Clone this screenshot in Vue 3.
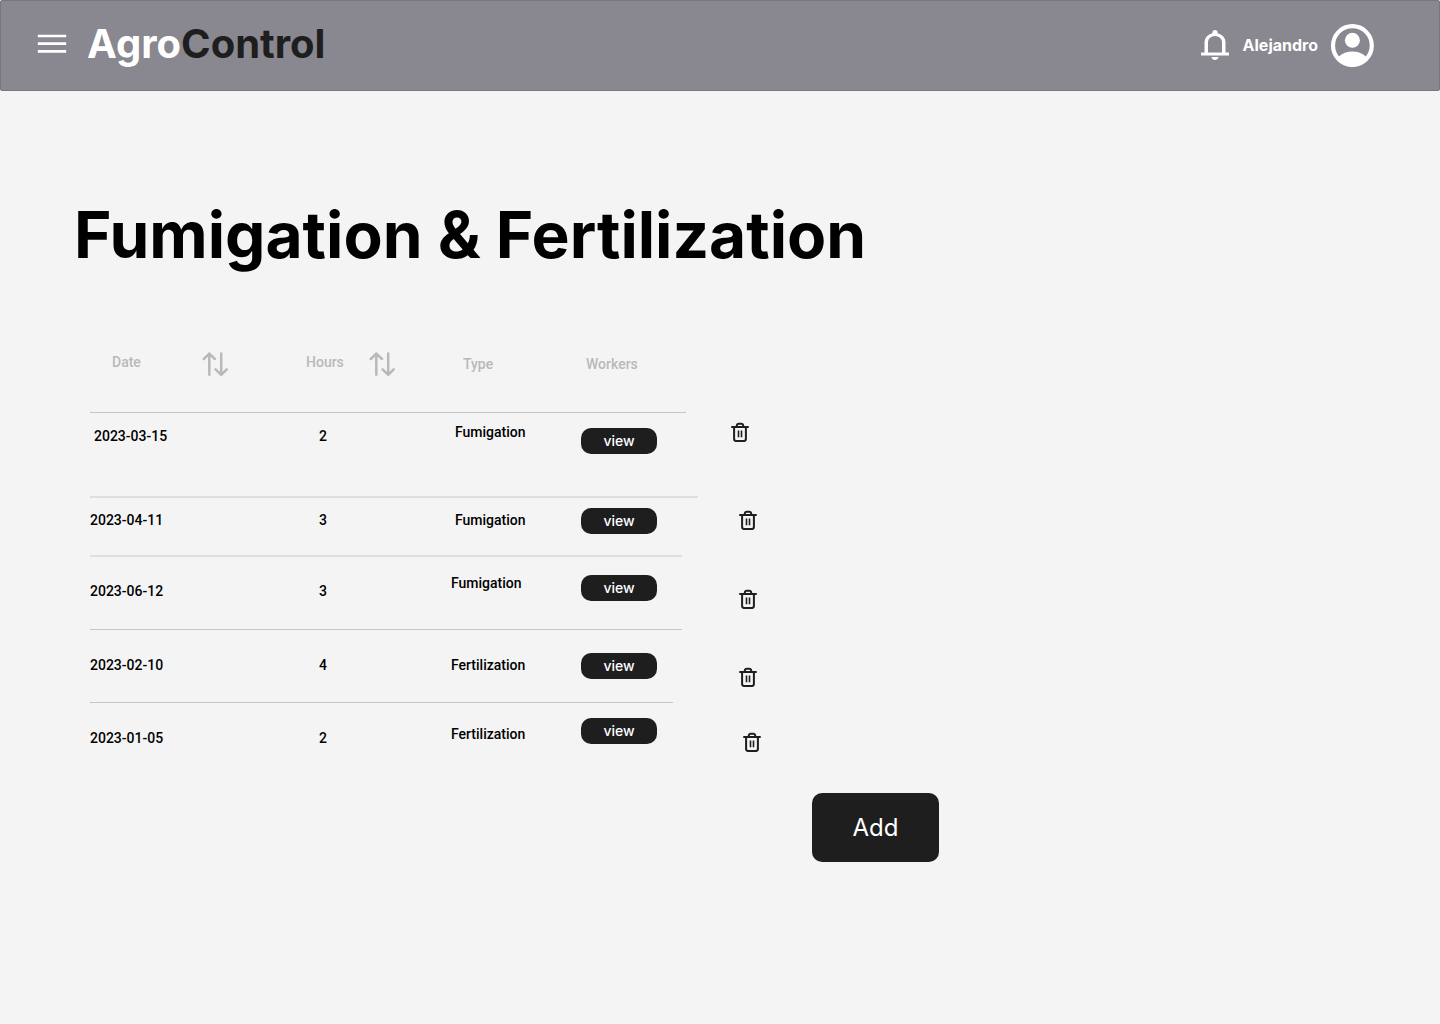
<script setup>
const rows = [
  { date: '2023-03-15', hours: 2, type: 'Fumigation', row: 'tall', cells: ['d16 in4', 'd16', 'd12 in4', 'd16', 'd8'] },
  { date: '2023-04-11', hours: 3, type: 'Fumigation', row: 'short', cells: ['d16', 'd16', 'd16 in4', 'd12', 'd12 in8'] },
  { date: '2023-06-12', hours: 3, type: 'Fumigation', row: 'medium soft', cells: ['d28', 'd28', 'd20', 'd20', 'd32 in8'] },
  { date: '2023-02-10', hours: 4, type: 'Fertilization', row: 'medium', cells: ['d28', 'd28', 'd28', 'd24', 'd36 in8'] },
  { date: '2023-01-05', hours: 2, type: 'Fertilization', row: 'medium narrow', cells: ['d28', 'd28', 'd24', 'd16', 'd28 in12'] },
]
</script>

<template>
  <div class="page">
    <header class="topbar">
      <button class="icon-btn" type="button" aria-label="Menu">
        <svg width="30" height="20" viewBox="0 0 30 20">
          <path d="M.8 2h28.4M.8 9.7h28.4M.8 17.4h28.4" stroke="#fff" stroke-width="2.7" />
        </svg>
      </button>
      <a class="brand" href="#">Agro<span>Control</span></a>
      <div class="account">
        <button class="icon-btn" type="button" aria-label="Notifications">
          <svg width="28" height="30" viewBox="4 2 16 20" preserveAspectRatio="none">
            <path
              fill="#fff"
              d="M4 19v-2h2v-7q0-2.075 1.25-3.687T10.5 4.2v-.7q0-.625.438-1.062T12 2t1.063.438T13.5 3.5v.7q2 .5 3.25 2.113T18 10v7h2v2zm8 3q-.825 0-1.412-.587T10 20h4q0 .825-.587 1.413T12 22m-4-5h8v-7q0-1.65-1.175-2.825T12 6T9.175 7.175T8 10z"
            />
          </svg>
        </button>
        <span class="user">Alejandro</span>
        <button class="icon-btn" type="button" aria-label="Profile">
          <svg width="44" height="44" viewBox="0 0 44 44">
            <circle cx="22.4" cy="22.6" r="19.4" fill="none" stroke="#fff" stroke-width="4.2" />
            <circle cx="22.4" cy="17.2" r="7.5" fill="#fff" />
            <path fill="#fff" d="M8.4 34Q14.4 28.6 22.4 28.6T36.4 34A18.5 18.5 0 0 1 8.4 34Z" />
          </svg>
        </button>
      </div>
    </header>

    <main>
      <h1>Fumigation &amp; Fertilization</h1>

      <table>
        <colgroup>
          <col class="c-date" />
          <col class="c-hours" />
          <col class="c-type" />
          <col class="c-workers" />
          <col class="c-delete" />
        </colgroup>
        <thead>
          <tr>
            <th scope="col">
              <div class="head head-date">
                <span>Date</span>
                <button class="icon-btn" type="button" aria-label="Sort by date">
                  <svg class="sort" width="26" height="26" viewBox="0 0 26 26">
                    <path d="M7.3 23.8V2.6M1.8 8l5.5-5.4L12.9 8M19.2 2.6v21.2M13.6 18.3l5.6 5.5 5.5-5.5" />
                  </svg>
                </button>
              </div>
            </th>
            <th scope="col">
              <div class="head head-hours">
                <span>Hours</span>
                <button class="icon-btn" type="button" aria-label="Sort by hours">
                  <svg class="sort" width="26" height="26" viewBox="0 0 26 26">
                    <path d="M7.3 23.8V2.6M1.8 8l5.5-5.4L12.9 8M19.2 2.6v21.2M13.6 18.3l5.6 5.5 5.5-5.5" />
                  </svg>
                </button>
              </div>
            </th>
            <th scope="col"><div class="head head-type">Type</div></th>
            <th scope="col"><div class="head head-workers">Workers</div></th>
            <td></td>
          </tr>
        </thead>
        <tbody>
          <tr v-for="r in rows" :key="r.date" :class="r.row">
            <td :class="r.cells[0]">{{ r.date }}</td>
            <td :class="r.cells[1]"><div class="hours">{{ r.hours }}</div></td>
            <td :class="r.cells[2]">{{ r.type }}</td>
            <td :class="r.cells[3]"><button class="view" type="button">view</button></td>
            <td :class="r.cells[4]">
              <button class="icon-btn" type="button" :aria-label="'Delete ' + r.date">
                <svg class="trash" width="24" height="24" viewBox="0 0 24 24">
                  <path d="M4 7.1h16M6.1 7.1v12a1.8 1.8 0 0 0 1.8 1.8h8.2a1.8 1.8 0 0 0 1.8-1.8v-12M8.8 6.9V5.6a1.9 1.9 0 0 1 1.9-1.9h2.6a1.9 1.9 0 0 1 1.9 1.9v1.3" />
                  <path class="bars" d="M10.5 10.6v6.6M13.5 10.6v6.6" />
                </svg>
              </button>
            </td>
          </tr>
        </tbody>
      </table>

      <button class="add" type="button">Add</button>
    </main>
  </div>
</template>

<style>
body {
  background: #f4f4f4;
}
</style>

<style scoped>
.page {
  font-family: Roboto, sans-serif;
  color: #000;
}

button {
  font-family: inherit;
  border: 0;
  cursor: pointer;
}

.icon-btn {
  display: block;
  padding: 0;
  background: none;
}

svg {
  display: block;
}

.topbar {
  display: flex;
  align-items: center;
  box-sizing: border-box;
  height: 91px;
  padding: 0 65px 4px 36px;
  background: #89878f;
  border: 1px solid #79777f;
  border-radius: 2px;
}

.brand {
  margin-left: 20px;
  font: 700 40px/48px Inter, sans-serif;
  color: #fff;
  text-decoration: none;
}

.brand span {
  color: #1e1e1e;
}

.account {
  display: flex;
  align-items: center;
  margin-left: auto;
  padding-top: 2px;
}

.user {
  margin: 0 12px 0 14px;
  font: 700 16px/20px Inter, sans-serif;
  color: #fff;
}

main {
  padding: 104px 70px 60px;
}

h1 {
  margin: 0 0 0 4px;
  font: 700 64px/80px Inter, sans-serif;
}

table {
  width: 680px;
  margin: 65px 0 0 20px;
  table-layout: fixed;
  border-collapse: collapse;
  font-size: 14px;
  font-weight: 500;
  line-height: 16px;
}

.c-date { width: 213px; }
.c-hours { width: 148px; }
.c-type { width: 130px; }
.c-workers { width: 147px; }

th,
td {
  padding: 0;
  text-align: left;
  vertical-align: top;
  font-weight: 500;
}

thead tr {
  height: 72px;
}

.head {
  display: flex;
  align-items: center;
  height: 26px;
  padding-top: 11px;
  color: #b9b9b9;
}

.head span {
  margin-bottom: 4px;
}

.head-date {
  gap: 61px;
  padding-left: 22px;
}

.head-hours {
  gap: 25px;
  padding-left: 3px;
}

.head-type {
  padding-left: 12px;
}

.head-workers {
  padding-left: 5px;
}

.sort {
  fill: none;
  stroke: #b9b9b9;
  stroke-width: 2.5;
  stroke-linecap: round;
  stroke-linejoin: round;
}

tbody tr {
  background: linear-gradient(#c5c5d2, #c5c5d2) no-repeat 0 0 / 592px 1px;
}

.tall {
  height: 84px;
  background-size: 596px 1px;
}

.short {
  height: 59px;
  background: linear-gradient(#dedee4, #dedee4) no-repeat 0 0 / 608px 2px;
}

.medium {
  height: 73px;
}

.soft {
  height: 74px;
  background: linear-gradient(#dedee4, #dedee4) no-repeat 0 0 / 592px 2px;
}

.narrow {
  background-size: 583px 1px;
}

.d8 { padding-top: 8px; }
.d12 { padding-top: 12px; }
.d16 { padding-top: 16px; }
.d20 { padding-top: 20px; }
.d24 { padding-top: 24px; }
.d28 { padding-top: 28px; }
.d32 { padding-top: 32px; }
.d36 { padding-top: 36px; }

.in4 { padding-left: 4px; }
.in8 { padding-left: 8px; }
.in12 { padding-left: 12px; }

.hours {
  width: 40px;
  text-align: center;
}

.view {
  display: block;
  width: 76px;
  height: 26px;
  padding: 0;
  border-radius: 10px;
  background: #1e1e1e;
  color: #fff;
  font: 500 14px/26px Inter, sans-serif;
}

.trash {
  fill: none;
  stroke: #1e1e1e;
  stroke-width: 2;
  stroke-linecap: round;
}

.bars {
  stroke-width: 1.6;
  stroke-linecap: butt;
}

.add {
  display: block;
  width: 127px;
  height: 69px;
  margin: 18px 0 0 742px;
  padding: 0;
  border-radius: 10px;
  background: #1e1e1e;
  color: #fff;
  font: 400 24px/30px Inter, sans-serif;
}
</style>
